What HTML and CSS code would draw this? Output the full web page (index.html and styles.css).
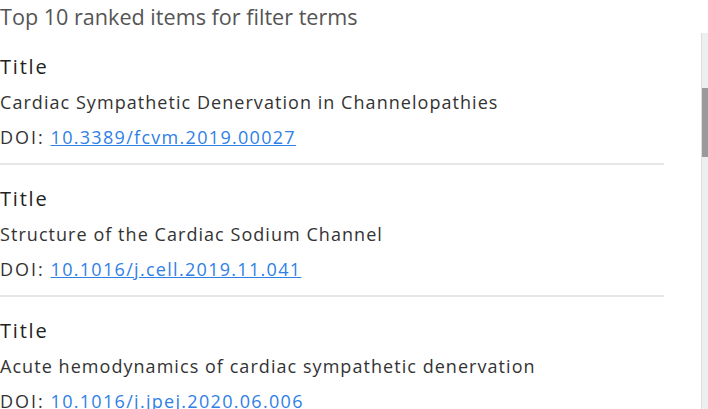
FILE: index.html
```html
<!DOCTYPE html>
<html>
<head>
<meta charset="utf-8">
<link rel="stylesheet" href="styles.css">
</head>
<body>
<h2 class="heading">Top 10 ranked items for filter terms</h2>
<div class="panel">
  <div class="list">
    <div class="item">
      <div class="label">Title</div>
      <div class="text">Cardiac Sympathetic Denervation in Channelopathies</div>
      <div class="text"><span class="doi-label">DOI:</span> <a class="doi" href="#">10.3389/fcvm.2019.00027</a></div>
    </div>
    <div class="item">
      <div class="label">Title</div>
      <div class="text">Structure of the Cardiac Sodium Channel</div>
      <div class="text"><span class="doi-label">DOI:</span> <a class="doi" href="#">10.1016/j.cell.2019.11.041</a></div>
    </div>
    <div class="item">
      <div class="label">Title</div>
      <div class="text">Acute hemodynamics of cardiac sympathetic denervation</div>
      <div class="text"><span class="doi-label">DOI:</span> <a class="doi" href="#">10.1016/j.jpej.2020.06.006</a></div>
    </div>
  </div>
  <div class="scrollbar"><div class="thumb"></div></div>
</div>
</body>
</html>
```
FILE: styles.css
```css
html, body {
  margin: 0;
  padding: 0;
  background: #ffffff;
  overflow: hidden;
  width: 708px;
  height: 409px;
}
body {
  font-family: "Open Sans", "Liberation Sans", sans-serif;
}
.heading {
  margin: 0;
  font-size: 21.6px;
  font-weight: 400;
  line-height: 33px;
  color: #555555;
  height: 33px;
}
.panel {
  display: flex;
  align-items: flex-start;
}
.list {
  width: 664px;
  flex: none;
}
.item {
  padding: 15px 0 8px 0;
  border-bottom: 2px solid #e6e6e6;
}
.label {
  font-size: 20px;
  letter-spacing: 1.8px;
  line-height: 37px;
  color: #222222;
}
.text {
  font-size: 18px;
  letter-spacing: 1.05px;
  line-height: 35px;
  color: #333333;
}
.doi-label {
  letter-spacing: 2px;
}
.doi {
  color: #2f7fe6;
  text-decoration: underline;
  letter-spacing: 1.3px;
}
.scrollbar {
  flex: none;
  margin-left: 37px;
  width: 14px;
  height: 400px;
  background: #edeef0;
  border-left: 1px solid #dddddd;
}
.thumb {
  margin-top: 55px;
  height: 69px;
  background: #9a9a9a;
}
```
